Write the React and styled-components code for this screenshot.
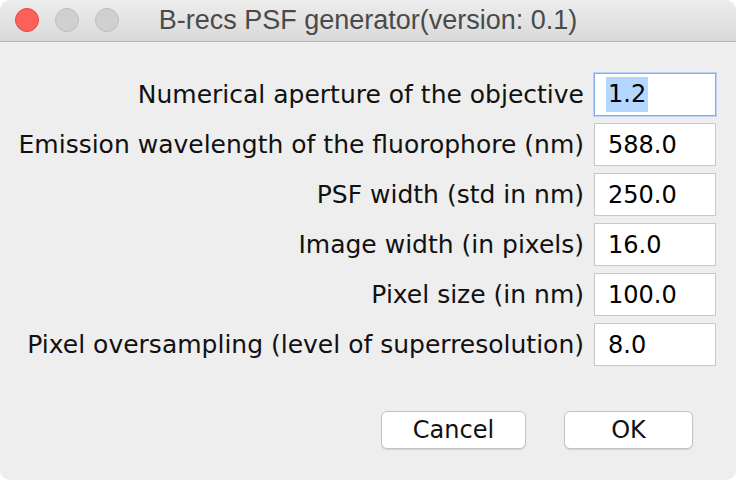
import React from "react";
import styled, { createGlobalStyle } from "styled-components";

const Global = createGlobalStyle`
  html, body {
    margin: 0;
    padding: 0;
    background: #ffffff;
  }
  * {
    box-sizing: border-box;
  }
`;

const Window = styled.div`
  width: 736px;
  height: 480px;
  display: flex;
  flex-direction: column;
  background: #eeeeee;
  border-radius: 10px;
  overflow: hidden;
`;

const TitleBar = styled.div`
  position: relative;
  height: 42px;
  flex: none;
  display: flex;
  align-items: center;
  justify-content: center;
  background: linear-gradient(#ededed, #d9d9d9);
  border-bottom: 1px solid #b5b5b5;
`;

const Lights = styled.div`
  position: absolute;
  left: 15px;
  top: 8px;
  display: flex;
  gap: 16px;
`;

const Light = styled.span`
  width: 24px;
  height: 24px;
  border-radius: 50%;
  background: ${(p) => (p.$red ? "#fc605c" : "#d0d0d0")};
  border: 1px solid ${(p) => (p.$red ? "#de4a45" : "#bdbdbd")};
`;

const Title = styled.div`
  font-family: "Liberation Sans", Arial, sans-serif;
  font-size: 27px;
  color: #4a4a4a;
`;

const Body = styled.div`
  flex: 1;
  display: flex;
  flex-direction: column;
  padding: 31px 20px 0 0;
`;

const Form = styled.div`
  display: grid;
  grid-template-columns: 1fr 122px;
  column-gap: 10px;
  row-gap: 7px;
`;

const Label = styled.div`
  font-family: "DejaVu Sans", sans-serif;
  font-size: 25px;
  color: #111111;
  text-align: right;
  align-self: center;
  white-space: nowrap;
`;

const Field = styled.div`
  height: 43px;
  background: #ffffff;
  border: 1px solid ${(p) => (p.$focus ? "#80aef0" : "#c8c8c8")};
  box-shadow: ${(p) => (p.$focus ? "0 0 0 1px #b9d3f6" : "none")};
  display: flex;
  align-items: center;
  padding-left: 13px;
  font-family: "DejaVu Sans", sans-serif;
  font-size: 24px;
  color: #000000;
`;

const Selected = styled.span`
  background: #b3d7ff;
  padding: 3px 2px 4px;
  margin-left: -2px;
`;

const Buttons = styled.div`
  display: flex;
  justify-content: flex-end;
  gap: 38px;
  padding: 45px 23px 0 0;
`;

const Button = styled.button`
  width: ${(p) => p.$w}px;
  height: 38px;
  background: #ffffff;
  border: 1px solid #c4c4c4;
  border-radius: 6px;
  box-shadow: 0 1px 1px rgba(0, 0, 0, 0.12);
  font-family: "DejaVu Sans", sans-serif;
  font-size: 24px;
  color: #111111;
  padding: 0;
`;

const rows = [
  ["Numerical aperture of the objective", "1.2"],
  ["Emission wavelength of the fluorophore (nm)", "588.0"],
  ["PSF width (std in nm)", "250.0"],
  ["Image width (in pixels)", "16.0"],
  ["Pixel size (in nm)", "100.0"],
  ["Pixel oversampling (level of superresolution)", "8.0"],
];

export default function App() {
  return (
    <>
      <Global />
      <Window>
        <TitleBar>
          <Lights>
            <Light $red />
            <Light />
            <Light />
          </Lights>
          <Title>B-recs PSF generator(version: 0.1)</Title>
        </TitleBar>
        <Body>
          <Form>
            {rows.map(([label, value], i) => (
              <React.Fragment key={label}>
                <Label>{label}</Label>
                <Field $focus={i === 0}>
                  {i === 0 ? <Selected>{value}</Selected> : value}
                </Field>
              </React.Fragment>
            ))}
          </Form>
          <Buttons>
            <Button $w={145}>Cancel</Button>
            <Button $w={129}>OK</Button>
          </Buttons>
        </Body>
      </Window>
    </>
  );
}
